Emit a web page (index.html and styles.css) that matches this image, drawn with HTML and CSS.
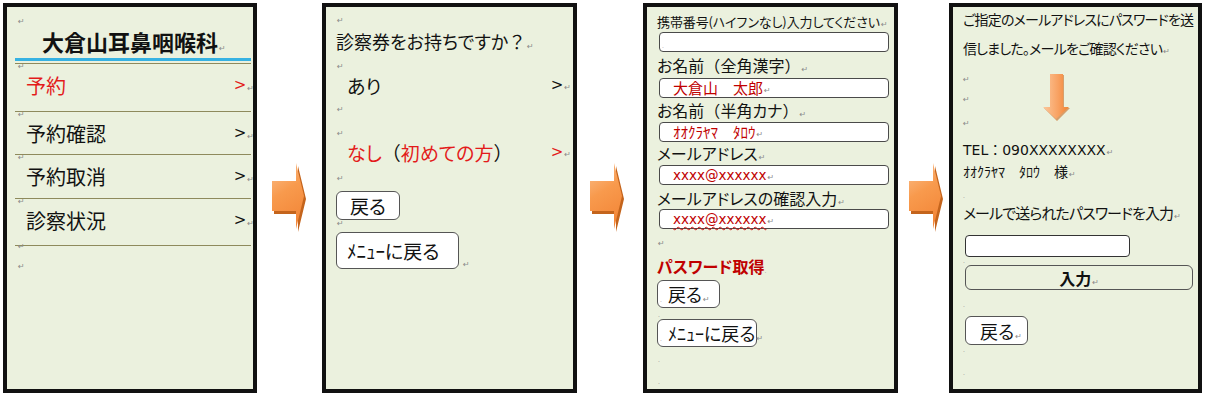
FILE: index.html
```html
<!DOCTYPE html>
<html lang="ja">
<head>
<meta charset="utf-8">
<title>予約フロー</title>
<link rel="stylesheet" href="styles.css">
</head>
<body>
<main class="board">

  <section class="panel p1">
    <span class="mark p1-lead">↵</span>
    <h1 class="p1-title">大倉山耳鼻咽喉科<span class="pm">↵</span></h1>
    <div class="p1-rule"></div>
    <ul class="menu">
      <li class="menu-item">
        <span class="mark menu-mark">↵</span>
        <div class="menu-line is-active"><span class="menu-label">予約</span><span class="chev">&gt;</span><span class="pm">↵</span></div>
      </li>
      <li class="menu-item">
        <span class="mark menu-mark">↵</span>
        <div class="menu-line"><span class="menu-label">予約確認</span><span class="chev">&gt;</span><span class="pm">↵</span></div>
      </li>
      <li class="menu-item">
        <span class="mark menu-mark">↵</span>
        <div class="menu-line"><span class="menu-label">予約取消</span><span class="chev">&gt;</span><span class="pm">↵</span></div>
      </li>
      <li class="menu-item">
        <span class="mark menu-mark">↵</span>
        <div class="menu-line"><span class="menu-label">診察状況</span><span class="chev">&gt;</span><span class="pm">↵</span></div>
      </li>
    </ul>
    <span class="mark p1-after">↵</span>
    <span class="mark p1-end">↵</span>
  </section>

  <div class="link link-1">
    <svg class="arrow-r" width="36" height="70" viewBox="0 0 36 70" aria-hidden="true">
      <defs>
        <linearGradient id="ar1" x1="0" y1="0" x2="0.3" y2="1">
          <stop offset="0" stop-color="#fbc190"/>
          <stop offset="0.5" stop-color="#f89a4d"/>
          <stop offset="1" stop-color="#f3883a"/>
        </linearGradient>
      </defs>
      <path d="M2 21H26V3L34 36L26 69V51H2Z" fill="#c4641c"/>
      <path d="M0 18H24V0L32 33L24 66V48H0Z" fill="url(#ar1)"/>
    </svg>
  </div>

  <section class="panel p2">
    <span class="mark p2-m1">↵</span>
    <p class="p2-question">診察券をお持ちですか<span class="fw">？</span><span class="pm">↵</span></p>
    <span class="mark p2-m2">↵</span>
    <div class="choice p2-yes"><span class="choice-label">あり</span><span class="chev">&gt;</span><span class="pm">↵</span></div>
    <span class="mark p2-m3">↵</span>
    <span class="mark p2-m4">↵</span>
    <div class="choice p2-no"><span class="choice-label"><span class="red">なし</span><span class="fw">（</span><span class="red">初めての方</span><span class="fw">）</span></span><span class="chev red">&gt;</span><span class="pm">↵</span></div>
    <span class="mark p2-m5">↵</span>
    <button class="btn p2-back" type="button">戻る</button>
    <span class="mark p2-m6">↵</span>
    <div class="btn-row p2-menu-row">
      <button class="btn p2-menu" type="button"><span class="fw">ﾒﾆｭｰ</span>に戻る</button><span class="pm">↵</span>
    </div>
  </section>

  <div class="link link-2">
    <svg class="arrow-r" width="36" height="70" viewBox="0 0 36 70" aria-hidden="true">
      <defs>
        <linearGradient id="ar2" x1="0" y1="0" x2="0.3" y2="1">
          <stop offset="0" stop-color="#fbc190"/>
          <stop offset="0.5" stop-color="#f89a4d"/>
          <stop offset="1" stop-color="#f3883a"/>
        </linearGradient>
      </defs>
      <path d="M2 21H26V3L34 36L26 69V51H2Z" fill="#c4641c"/>
      <path d="M0 18H24V0L32 33L24 66V48H0Z" fill="url(#ar2)"/>
    </svg>
  </div>

  <section class="panel p3">
    <p class="p3-label p3-l1">携帯番号(ハイフンなし)入力してください<span class="pm">↵</span></p>
    <div class="field"><span class="tiny">.</span></div>
    <p class="p3-label p3-l2">お名前<span class="fw">（</span>全角漢字<span class="fw">）</span><span class="pm">↵</span></p>
    <div class="field"><span class="field-text fw">大倉山　太郎</span><span class="pm">↵</span></div>
    <p class="p3-label p3-l3">お名前<span class="fw">（</span>半角カナ<span class="fw">）</span><span class="pm">↵</span></p>
    <div class="field"><span class="field-text fw">ｵｵｸﾗﾔﾏ　ﾀﾛｳ</span><span class="pm">↵</span></div>
    <p class="p3-label p3-l4">メールアドレス<span class="pm">↵</span></p>
    <div class="field"><span class="field-text latin">xxxx@xxxxxx</span><span class="pm">↵</span></div>
    <p class="p3-label p3-l5">メールアドレスの確認入力<span class="pm">↵</span></p>
    <div class="field"><span class="field-text latin wavy">xxxx@xxxxxx</span><span class="pm">↵</span></div>
    <span class="mark p3-m1">↵</span>
    <p class="p3-action">パスワード取得<span class="tiny">.</span></p>
    <button class="btn p3-back" type="button"><span class="tiny">.</span>戻る<span class="pm">↵</span></button>
    <span class="mark tiny-mark p3-m2">.</span>
    <button class="btn p3-menu" type="button"><span class="tiny">.</span><span class="fw">ﾒﾆｭｰ</span>に戻る<span class="pm">↵</span></button>
    <span class="mark tiny-mark p3-m3">.</span>
    <span class="mark tiny-mark p3-m4">.</span>
  </section>

  <div class="link link-3">
    <svg class="arrow-r" width="36" height="70" viewBox="0 0 36 70" aria-hidden="true">
      <defs>
        <linearGradient id="ar3" x1="0" y1="0" x2="0.3" y2="1">
          <stop offset="0" stop-color="#fbc190"/>
          <stop offset="0.5" stop-color="#f89a4d"/>
          <stop offset="1" stop-color="#f3883a"/>
        </linearGradient>
      </defs>
      <path d="M2 21H26V3L34 36L26 69V51H2Z" fill="#c4641c"/>
      <path d="M0 18H24V0L32 33L24 66V48H0Z" fill="url(#ar3)"/>
    </svg>
  </div>

  <section class="panel p4">
    <p class="p4-notice">ご指定のメールアドレスにパスワードを送<br>信しました。メールをご確認ください<span class="pm">↵</span></p>
    <span class="mark p4-m1">↵</span>
    <span class="mark p4-m2">↵</span>
    <span class="mark p4-m3">↵</span>
    <svg class="arrow-d" width="28" height="48" viewBox="0 0 28 48" aria-hidden="true">
      <defs>
        <linearGradient id="ad" x1="0" y1="0" x2="1" y2="0">
          <stop offset="0" stop-color="#fcc89c"/>
          <stop offset="0.6" stop-color="#f8a060"/>
          <stop offset="1" stop-color="#ef8330"/>
        </linearGradient>
      </defs>
      <path d="M8 1H21V34H27L14 47L1 34H8Z" fill="#c8691f" opacity="0.6"/>
      <path d="M7 0H20V33H26L13 45L0 33H7Z" fill="url(#ad)"/>
    </svg>
    <p class="p4-line p4-tel">TEL<span class="tel-colon">：</span>090XXXXXXXX<span class="pm">↵</span></p>
    <p class="p4-line p4-name fw">ｵｵｸﾗﾔﾏ　ﾀﾛｳ　様<span class="pm">↵</span></p>
    <span class="mark tiny-mark p4-m4">.</span>
    <p class="p4-line p4-prompt">メールで送られたパスワードを入力<span class="pm">↵</span></p>
    <div class="field p4-field"></div>
    <span class="mark tiny-mark p4-m5">.</span>
    <button class="btn p4-submit" type="button">入力<span class="pm">↵</span></button>
    <span class="mark tiny-mark p4-m6">.</span>
    <button class="btn p4-back" type="button">戻る<span class="pm">↵</span></button>
    <span class="mark tiny-mark p4-m7">.</span>
    <span class="mark tiny-mark p4-m8">.</span>
  </section>

</main>
</body>
</html>
```

FILE: styles.css
```css
* { box-sizing: border-box; }

html, body {
  margin: 0;
  padding: 0;
  background: #ffffff;
}

body {
  width: 1208px;
  height: 398px;
  overflow: hidden;
  font-family: "Noto Sans CJK JP", "Noto Sans", sans-serif;
  font-feature-settings: "palt";
  color: #111;
}

p, h1, ul { margin: 0; padding: 0; }

.board {
  display: flex;
  align-items: flex-start;
  padding: 3px 0 0 3px;
}

.panel {
  position: relative;
  height: 390px;
  flex-shrink: 0;
  background: #ebf1de;
  border: 4px solid #111;
}
.p1 { width: 254px; }
.p2, .p3 { width: 255px; }
.p4 { width: 253px; }

.link {
  height: 390px;
  flex-shrink: 0;
  display: flex;
  align-items: center;
}
.link-1 { width: 65px; padding-left: 15px; }
.link-2 { width: 66px; padding-left: 13px; }
.link-3 { width: 51px; padding-left: 11px; }
.arrow-r { display: block; }

/* paragraph marks */
.pm {
  font-family: "DejaVu Sans", sans-serif;
  font-feature-settings: normal;
  font-size: 8px;
  font-weight: 400;
  line-height: 1;
  letter-spacing: 0;
  color: #8a8a8a;
  margin-left: 1px;
}
.mark {
  display: block;
  width: 10px;
  height: 8px;
  line-height: 8px;
  font-family: "DejaVu Sans", sans-serif;
  font-size: 8px;
  color: #8a8a8a;
}
.tiny-mark { font-size: 6px; }
.tiny {
  font-family: "DejaVu Sans", sans-serif;
  font-size: 6px;
  line-height: 1;
  color: #9a9a9a;
  font-weight: 400;
}

.red { color: #e31b1b; }
.fw { font-feature-settings: normal; }

.chev {
  font-family: "DejaVu Sans", sans-serif;
  font-size: 15px;
}

/* ---------- panel 1 ---------- */
.p1-lead { margin: 11px 0 0 11px; }
.p1-title {
  margin-top: 1px;
  padding-left: 35px;
  font-size: 22px;
  font-weight: 700;
  line-height: 28px;
  height: 28px;
}
.p1-rule {
  margin: 3px 2px 0 8px;
  height: 3px;
  background: #36b2e2;
}
.menu {
  list-style: none;
  margin: 2px 2px 0 8px;
  border-bottom: 1px solid #8e8a5c;
}
.menu-item {
  border-top: 1px solid #8e8a5c;
  height: 48px;
}
.menu-item:nth-child(2) { height: 43px; }
.menu-item:nth-child(3) { height: 44px; }
.menu-item:nth-child(4) { height: 47px; }
.menu-mark { margin: -1px 0 0 3px; }
.menu-line {
  display: flex;
  align-items: center;
  height: 28px;
  padding: 0 0 0 11px;
  margin-right: -3px;
  font-size: 20px;
}
.menu-line .menu-label { flex: 1; }
.menu-line .pm { align-self: flex-end; margin-bottom: 6px; }
.menu-line.is-active { color: #e31b1b; }
.menu-line.is-active .pm { color: #8a8a8a; }
.p1-after { margin: -3px 0 0 11px; }
.p1-end { margin: 12px 0 0 11px; }

/* ---------- panel 2 ---------- */
.p2 .mark { margin-left: 11px; }
.p2-m1 { margin-top: 10px; }
.p2-question {
  margin-top: 4px;
  padding-left: 10px;
  font-size: 18px;
  line-height: 24px;
  height: 24px;
}
.p2-m2 { margin-top: 10px; }
.choice {
  display: flex;
  align-items: center;
  margin-top: 2px;
  height: 24px;
  padding: 0 2px 0 21px;
  font-size: 19px;
}
.choice .choice-label { flex: 1; }
.choice .pm { align-self: flex-end; margin-bottom: 5px; }
.p2-m3 { margin-top: 9px; }
.p2-m4 { margin-top: 16px; }
.p2-m5 { margin-top: 11px; }

.btn {
  display: block;
  padding: 0;
  font-family: inherit;
  font-feature-settings: "palt";
  color: #111;
  background: #ffffff;
  border: 1px solid #555;
  border-radius: 6px;
  text-align: left;
  white-space: nowrap;
}
.p2-back {
  margin: 8px 0 0 10px;
  width: 64px;
  height: 29px;
  padding-left: 13px;
  font-size: 19px;
  line-height: 26px;
}
.p2-m6 { margin-top: 0; }
.btn-row { display: flex; align-items: flex-end; }
.p2-menu-row { margin: 4px 0 0 10px; }
.p2-menu {
  width: 123px;
  height: 37px;
  padding: 0 0 0 10px;
  font-size: 19px;
  line-height: 26px;
  align-self: flex-start;
}
.p2-menu-row .pm { margin: 0 0 0 4px; }

/* ---------- panel 3 ---------- */
.p3-label {
  padding-left: 10px;
  font-size: 16px;
  white-space: nowrap;
}
.p3-l1 {
  margin-top: 5px;
  font-size: 13px;
  line-height: 20px;
  height: 20px;
  letter-spacing: -0.1px;
}
.p3-l2 { line-height: 26px; height: 26px; }
.p3-l3 { line-height: 24px; height: 24px; }
.p3-l4 { line-height: 23px; height: 23px; }
.p3-l5 { padding-top: 3px; line-height: 21px; height: 24px; }

.field {
  display: flex;
  align-items: center;
  margin-left: 12px;
  width: 230px;
  height: 20px;
  padding-left: 13px;
  background: #ffffff;
  border: 1px solid #4a4a4a;
  border-radius: 4px;
  white-space: nowrap;
}
.field .tiny { margin-left: -11px; margin-top: 8px; }
.field-text {
  font-size: 15px;
  line-height: 18px;
  color: #c00000;
}
.field-text.latin {
  font-family: "DejaVu Sans", sans-serif;
  font-size: 13.5px;
}
.wavy {
  text-decoration: underline wavy #d01010;
  text-decoration-thickness: 1px;
  text-underline-offset: 2px;
}
.field .pm { margin-top: 6px; }

.p3 .mark { margin-left: 11px; }
.p3-m1 { margin-top: 11px; }
.p3-action {
  margin-top: 7px;
  padding-left: 10px;
  font-size: 16px;
  font-weight: 700;
  line-height: 22px;
  height: 22px;
  color: #c00000;
}
.p3-back, .p3-menu {
  margin: 3px 0 0 10px;
  height: 28px;
  padding-left: 2px;
  font-size: 18px;
  line-height: 24px;
}
.p3-back { width: 63px; }
.p3-menu { width: 100px; margin-top: 0; }
.btn .tiny { margin-right: 6px; }
.p3-m2 { margin-top: 3px; }
.p3-m3 { margin-top: 9px; }
.p3-m4 { margin-top: 14px; }

/* ---------- panel 4 ---------- */
.p4 .mark { margin-left: 10px; }
.p4-notice {
  margin-top: -2px;
  padding-left: 10px;
  font-size: 14px;
  line-height: 29px;
  height: 58px;
  letter-spacing: -0.8px;
  white-space: nowrap;
}
.p4-m1 { margin-top: 13px; }
.p4-m2 { margin-top: 12px; }
.p4-m3 { margin-top: 16px; }
.arrow-d {
  position: absolute;
  left: 90px;
  top: 67px;
}
.p4-line {
  padding-left: 10px;
  font-size: 14px;
  line-height: 22px;
  height: 22px;
  white-space: nowrap;
}
.p4-tel {
  margin-top: 10px;
  font-family: "DejaVu Sans", "Noto Sans CJK JP", sans-serif;
  font-size: 14px;
}
.tel-colon {
  font-family: "Noto Sans CJK JP", sans-serif;
  font-feature-settings: normal;
}
.p4-m4 { margin-top: 10px; }
.p4-prompt { margin-top: 2px; font-size: 15px; letter-spacing: -0.9px; }
.p4-field {
  margin-top: 11px;
  width: 165px;
  height: 22px;
  border-color: #333;
}
.p4-m5 { margin-top: 0; }
.p4-submit {
  margin-left: 12px;
  width: 228px;
  height: 25px;
  background: transparent;
  font-size: 16px;
  font-weight: 700;
  line-height: 22px;
  text-align: center;
}
.p4-m6 { margin-top: 11px; }
.p4-back {
  margin: 7px 0 0 12px;
  width: 63px;
  height: 29px;
  padding-left: 14px;
  font-size: 18px;
  line-height: 26px;
}
.p4-m7 { margin-top: 1px; }
.p4-m8 { margin-top: 15px; }
```
